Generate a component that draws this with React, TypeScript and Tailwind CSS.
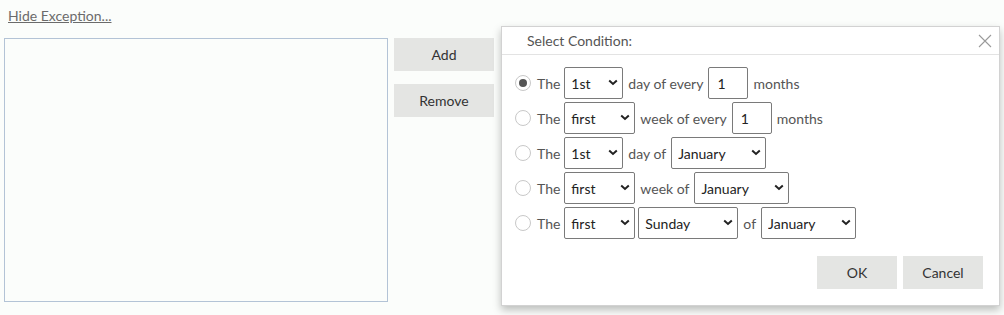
import React from 'react';

const font = { fontFamily: 'Lato, "Noto Sans", sans-serif' };

function Chevron() {
  return (
    <svg width="10" height="7" viewBox="0 0 10 7" className="pointer-events-none absolute right-[5px] top-[12px]">
      <path d="M1.2 1.5 L5 5 L8.8 1.5" fill="none" stroke="#222" strokeWidth="2" />
    </svg>
  );
}

function Select({ value, width }: { value: string; width: string }) {
  return (
    <div className={`relative h-[32px] ${width}`}>
      <select
        defaultValue={value}
        className="h-full w-full appearance-none rounded-[2px] border border-[#7a7a7a] bg-white pl-[6px] text-[14px] text-[#222] outline-none"
        style={font}
      >
        <option>{value}</option>
      </select>
      <Chevron />
    </div>
  );
}

function NumInput() {
  return (
    <input
      defaultValue="1"
      className="h-[32px] w-[40px] rounded-[2px] border border-[#7a7a7a] bg-white pl-[8px] text-[14px] text-[#222] outline-none"
      style={font}
    />
  );
}

function Radio({ checked }: { checked?: boolean }) {
  return (
    <span className="flex h-[16px] w-[16px] items-center justify-center rounded-full border border-[#c8c8c8] bg-white">
      {checked && <span className="h-[8px] w-[8px] rounded-full bg-[#555]" />}
    </span>
  );
}

function Row({ checked, children }: { checked?: boolean; children: React.ReactNode }) {
  return (
    <div className="flex h-[32px] items-center">
      <Radio checked={checked} />
      <span className="ml-[6px] mr-[4px] text-[#555]">The</span>
      <div className="flex items-center gap-[3px]">{children}</div>
    </div>
  );
}

const Txt = ({ children }: { children: React.ReactNode }) => (
  <span className="px-[2px] text-[#555]">{children}</span>
);

export default function App() {
  return (
    <div className="relative h-[315px] w-[1004px] overflow-hidden bg-[#fbfdfb] text-[14px]" style={font}>
      <div className="flex gap-[6px] pl-[4px] pt-[6px]">
        <div className="flex flex-col">
          <a href="#" className="ml-[4px] text-[14px] leading-[20px] text-[#6b6b6b] underline">
            Hide Exception...
          </a>
          <div className="mt-[12px] h-[264px] w-[384px] border border-[#b3c3d6] bg-[#fbfdfb]" />
        </div>
        <div className="flex flex-col gap-[13px] pt-[32px]">
          <button className="h-[33px] w-[100px] bg-[#e4e5e3] text-[#333]">Add</button>
          <button className="h-[33px] w-[100px] bg-[#e4e5e3] text-[#333]">Remove</button>
        </div>
      </div>

      {/* dialog */}
      <div className="absolute left-[501px] top-[26px] flex h-[280px] w-[499px] flex-col border border-[#d2d2d2] bg-white shadow-[0_4px_8px_rgba(0,0,0,0.25)]">
        <div className="flex h-[28px] items-center justify-between border-b border-[#e3e3e3] pl-[25px] pr-[7px]">
          <span className="text-[14px] text-[#555]">Select Condition:</span>
          <svg width="14" height="14" viewBox="0 0 14 14">
            <path d="M1 1 L13 13 M13 1 L1 13" stroke="#9a9a9a" strokeWidth="1.1" />
          </svg>
        </div>
        <div className="flex flex-col gap-[3px] pl-[13px] pt-[12px]">
          <Row checked>
            <Select value="1st" width="w-[59px]" />
            <Txt>day of every</Txt>
            <NumInput />
            <Txt>months</Txt>
          </Row>
          <Row>
            <Select value="first" width="w-[71px]" />
            <Txt>week of every</Txt>
            <NumInput />
            <Txt>months</Txt>
          </Row>
          <Row>
            <Select value="1st" width="w-[59px]" />
            <Txt>day of</Txt>
            <Select value="January" width="w-[95px]" />
          </Row>
          <Row>
            <Select value="first" width="w-[71px]" />
            <Txt>week of</Txt>
            <Select value="January" width="w-[95px]" />
          </Row>
          <Row>
            <Select value="first" width="w-[71px]" />
            <Select value="Sunday" width="w-[100px]" />
            <Txt>of</Txt>
            <Select value="January" width="w-[95px]" />
          </Row>
        </div>
        <div className="mt-auto flex justify-end gap-[6px] pb-[16px] pr-[16px]">
          <button className="h-[33px] w-[80px] bg-[#e4e5e3] text-[#333]">OK</button>
          <button className="h-[33px] w-[80px] bg-[#e4e5e3] text-[#333]">Cancel</button>
        </div>
      </div>
    </div>
  );
}
